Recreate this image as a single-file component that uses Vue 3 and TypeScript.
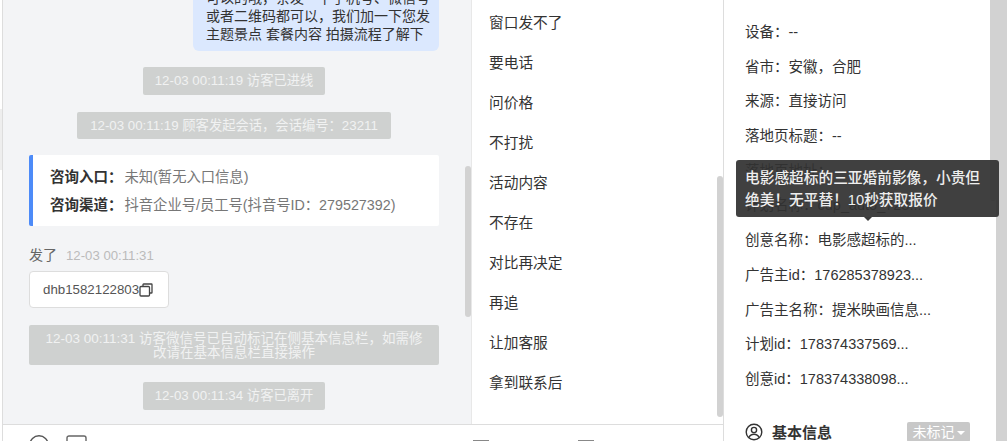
<script setup lang="ts">
const replies: string[] = ['窗口发不了', '要电话', '问价格', '不打扰', '活动内容', '不存在', '对比再决定', '再追', '让加客服', '拿到联系后']

const details: string[] = [
  '设备：--',
  '省市：安徽，合肥',
  '来源：直接访问',
  '落地页标题：--',
  '落地页地址：',
  '计划名称：cdp_auto_723...',
  '创意名称：电影感超标的...',
  '广告主id：176285378923...',
  '广告主名称：提米映画信息...',
  '计划id：178374337569...',
  '创意id：178374338098...',
]
</script>

<template>
  <div class="page">
    <div class="gutter"><i class="gutter__mark"></i></div>
    <div class="main">
      <div class="workspace">
        <section class="chat">
          <div class="chat__list">
            <div class="bubble">
              <div class="bubble__body">可以的哦，亲发一下手机号、微信号<br />或者二维码都可以，我们加一下您发<br />主题景点 套餐内容 拍摄流程了解下</div>
            </div>
            <div class="notice notice--first">12-03 00:11:19 访客已进线</div>
            <div class="notice notice--session">12-03 00:11:19 顾客发起会话，会话编号：23211</div>
            <div class="entry">
              <p><b>咨询入口：</b>未知(暂无入口信息)</p>
              <p><b>咨询渠道：</b>抖音企业号/员工号(抖音号ID：279527392)</p>
            </div>
            <div class="sent">发了<span>12-03 00:11:31</span></div>
            <div class="wechat">
              dhb1582122803
              <svg width="14" height="14" viewBox="0 0 14 14" fill="none" stroke="#444" stroke-width="1.3">
                <rect x="1" y="3.5" width="9.5" height="9.5" rx="1" />
                <path d="M4 3.2V1.600c0-.4.2-.6.6-.6h7.800c.4 0 .6.2.6.6v7.800c0 .4-.2.6-.6.6h-1.600" />
              </svg>
            </div>
            <div class="notice notice--wide">12-03 00:11:31 访客微信号已自动标记在侧基本信息栏，如需修改请在基本信息栏直接操作</div>
            <div class="notice notice--left">12-03 00:11:34 访客已离开</div>
          </div>
          <i class="chat__thumb"></i>
        </section>
        <section class="replies">
          <div v-for="item in replies" :key="item" class="replies__item">{{ item }}</div>
          <i class="replies__thumb"></i>
        </section>
      </div>
      <div class="toolbar">
        <svg class="toolbar__icon" width="20" height="20" viewBox="0 0 20 20" fill="none" stroke="#555" stroke-width="1.4">
          <circle cx="10" cy="10" r="9.200" />
        </svg>
        <svg class="toolbar__icon" width="21" height="21" viewBox="0 0 21 21" fill="none" stroke="#666" stroke-width="1.4">
          <rect x="1" y="1" width="19" height="19" rx="2" />
        </svg>
        <i class="toolbar__stub toolbar__stub--a"></i>
        <i class="toolbar__stub toolbar__stub--b"></i>
      </div>
    </div>
    <aside class="side">
      <div v-for="row in details" :key="row" class="side__row">{{ row }}</div>
      <div class="side__head">
        <svg width="18" height="18" viewBox="0 0 18 18" fill="none" stroke="#333" stroke-width="1.4">
          <circle cx="9" cy="9" r="7.800" />
          <circle cx="9" cy="7" r="2.600" />
          <path d="M4 14.400c.9-2.200 2.800-3.200 5-3.200s4.100 1 5 3.200" />
        </svg>
        <b>基本信息</b>
        <span class="side__tag">未标记<i></i></span>
      </div>
      <i class="side__thumb"></i>
      <div class="tooltip">电影感超标的三亚婚前影像，小贵但绝美！无平替！10秒获取报价<i></i></div>
    </aside>
    <div class="scrollbar"></div>
  </div>
</template>

<style>
html,
body {
  margin: 0;
  overflow: hidden;
}
</style>

<style scoped>
.page {
  display: flex;
  width: 1007px;
  height: 441px;
  overflow: hidden;
  position: relative;
  font-family: "Liberation Sans", "Noto Sans CJK SC", sans-serif;
  font-size: 14px;
  color: #333;
  background: #fff;
}
.gutter {
  width: 2px;
  flex: none;
  background: #fff;
  border-right: 1px solid #ddd;
  position: relative;
}
.gutter__mark {
  position: absolute;
  left: 0;
  top: 109px;
  width: 2px;
  height: 61px;
  background: #eee;
}
.main {
  width: 721px;
  flex: none;
  display: flex;
  flex-direction: column;
  box-sizing: border-box;
  border-right: 1px solid #ddd;
}
.workspace {
  display: flex;
  height: 424px;
  flex: none;
  border-bottom: 1px solid #ddd;
}
.chat {
  width: 468px;
  flex: none;
  background: #f3f4f6;
  position: relative;
  overflow: hidden;
}
.chat__list {
  display: flex;
  flex-direction: column;
  align-items: center;
  padding: 0 32px 0 26px;
}
.bubble {
  align-self: flex-end;
  background: #dbe8fe;
  border-radius: 0 0 6px 6px;
  padding: 0 13px;
  width: 246px;
  height: 51px;
  overflow: hidden;
  box-sizing: border-box;
  color: #333;
  line-height: 18px;
}
.bubble__body {
  margin-top: -11px;
  white-space: nowrap;
  font-size: 14px;
}
.notice {
  background: #cfd1d0;
  color: #f1f2f2;
  border-radius: 2px;
  text-align: center;
  box-sizing: border-box;
  font-size: 13.300px;
}
.notice--first {
  width: 182px;
  height: 28px;
  line-height: 28px;
  margin-top: 16px;
}
.notice--session {
  width: 314px;
  height: 27px;
  line-height: 27px;
  margin-top: 17px;
}
.notice--wide {
  width: 100%;
  height: 40px;
  line-height: 14px;
  padding: 7px 14px;
  margin-top: 17px;
  font-size: 13.500px;
}
.notice--left {
  width: 182px;
  height: 28px;
  line-height: 28px;
  margin-top: 17px;
}
.entry {
  width: 100%;
  height: 71px;
  box-sizing: border-box;
  margin-top: 16px;
  padding: 8px 17px;
  background: #fff;
  border-left: 4px solid #4d8bf8;
  border-radius: 2px;
  color: #777;
  font-size: 14.300px;
}
.entry p {
  margin: 0;
  line-height: 28px;
}
.entry b {
  color: #333;
  margin-right: 2px;
  font-size: 14.500px;
}
.sent {
  align-self: flex-start;
  margin-top: 19px;
  line-height: 20px;
  color: #666;
}
.sent span {
  margin-left: 9px;
  color: #bbb;
  font-size: 13.200px;
}
.wechat {
  align-self: flex-start;
  display: flex;
  align-items: center;
  width: 140px;
  height: 37px;
  box-sizing: border-box;
  margin-top: 5px;
  padding-left: 13px;
  background: #fff;
  border: 1px solid #ddd;
  border-radius: 4px;
  color: #555;
  font-size: 13.300px;
}
.chat__thumb {
  position: absolute;
  left: 462px;
  top: 166px;
  width: 6px;
  height: 151px;
  border-radius: 3px;
  background: #d2d2d2;
}
.replies {
  flex: 1;
  background: #fff;
  border-left: 1px solid #e8e8e8;
  position: relative;
  padding: 3px 0 0 17px;
  box-sizing: border-box;
  font-size: 14.700px;
}
.replies__item {
  height: 40px;
  line-height: 40px;
  color: #333;
}
.replies__thumb {
  position: absolute;
  right: 0;
  top: 176px;
  width: 6px;
  height: 241px;
  border-radius: 3px;
  background: #d2d2d2;
}
.toolbar {
  flex: 1;
  position: relative;
  display: flex;
  gap: 17px;
  padding: 10px 0 0 26px;
  background: #fff;
}
.toolbar__icon {
  flex: none;
}
.toolbar__stub {
  position: absolute;
  top: 15px;
  width: 16px;
  height: 1px;
  background: #888;
}
.toolbar__stub--a {
  left: 470px;
}
.toolbar__stub--b {
  left: 575px;
}
.side {
  width: 272px;
  flex: none;
  position: relative;
  box-sizing: border-box;
  padding: 15px 0 0 21px;
  background: #fff;
}
.side__row {
  height: 34.700px;
  line-height: 34.700px;
  white-space: nowrap;
  color: #333;
  font-size: 14.500px;
}
.side__head {
  display: flex;
  align-items: center;
  margin-top: 25px;
  height: 20px;
}
.side__head b {
  margin-left: 9px;
  font-size: 15px;
}
.side__tag {
  margin-left: 75px;
  width: 63px;
  height: 20px;
  line-height: 20px;
  background: #c8c8c8;
  color: #fff;
  border-radius: 2px;
  text-align: center;
  font-size: 14px;
}
.side__tag i {
  display: inline-block;
  margin-left: 2px;
  vertical-align: 2px;
  border: 4px solid transparent;
  border-top-color: #fff;
  border-bottom: 0;
}
.side__thumb {
  position: absolute;
  right: 0;
  top: -6px;
  width: 6px;
  height: 207px;
  border-radius: 3px;
  background: #d2d2d2;
}
.tooltip {
  position: absolute;
  left: 12px;
  top: 160px;
  width: 263px;
  height: 57px;
  box-sizing: border-box;
  padding: 7px 9px 0;
  line-height: 22px;
  background: rgba(50, 50, 50, 0.93);
  color: #eee;
  font-size: 14.700px;
  font-weight: 500;
  border-radius: 3px;
}
.tooltip i {
  position: absolute;
  left: 128px;
  bottom: -4px;
  border: 4px solid transparent;
  border-top-color: #3a3a3a;
  border-bottom: 0;
}
.scrollbar {
  flex: 1;
  background: #d2d2d2;
}
</style>
